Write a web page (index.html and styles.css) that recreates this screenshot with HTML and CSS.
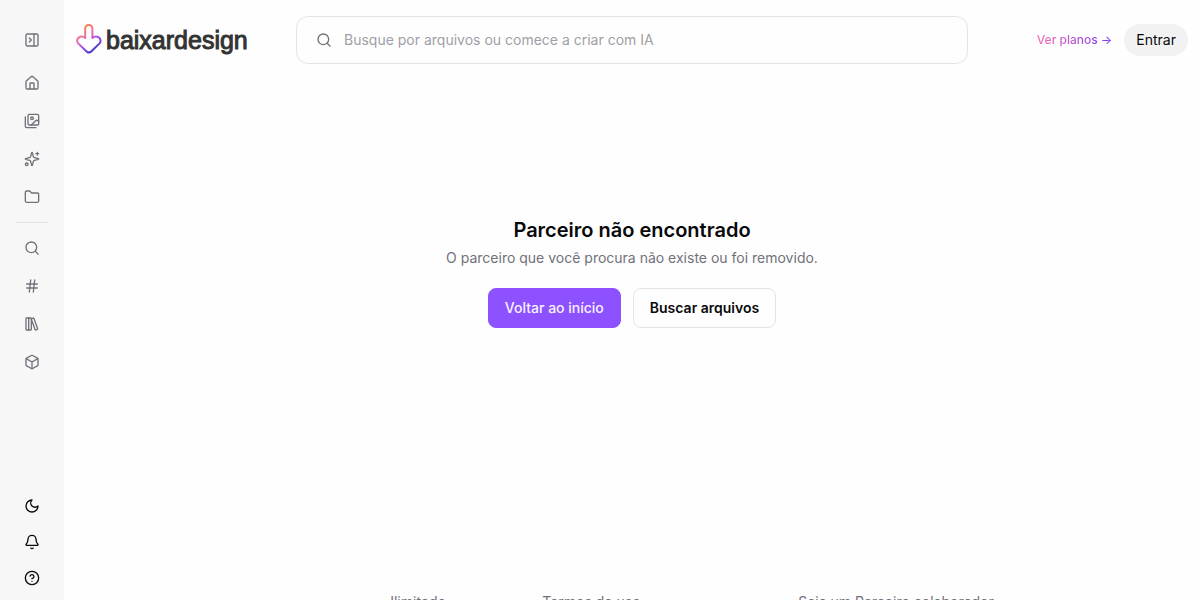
FILE: index.html
```html
<!DOCTYPE html>
<html lang="pt-BR">
<head>
    <meta charset="UTF-8">
    <meta name="viewport" content="width=device-width, initial-scale=1">
    <title>Parceiro não encontrado</title>
    <link rel="stylesheet" href="styles.css">
</head>
<body>
<aside class="sidebar">
    <button class="icon-button" aria-label="Expandir menu">
        <svg class="icon" viewBox="0 0 24 24"><rect x="3" y="3" width="18" height="18" rx="2"/><path d="M15 3v18M8 9l3 3-3 3"/></svg>
    </button>
    <nav class="menu">
        <a href="#" class="menu-link" aria-label="Início">
            <svg class="icon" viewBox="0 0 24 24"><path d="M15 21v-8a1 1 0 0 0-1-1h-4a1 1 0 0 0-1 1v8"/><path d="M3 10a2 2 0 0 1 .709-1.528l7-5.999a2 2 0 0 1 2.582 0l7 5.999A2 2 0 0 1 21 10v9a2 2 0 0 1-2 2H5a2 2 0 0 1-2-2z"/></svg>
        </a>
        <a href="#" class="menu-link" aria-label="Imagens">
            <svg class="icon" viewBox="0 0 24 24"><path d="M18 22H4a2 2 0 0 1-2-2V6"/><path d="m22 13-1.296-1.296a2.41 2.41 0 0 0-3.408 0L11 18"/><circle cx="12" cy="8" r="2"/><rect x="6" y="2" width="16" height="16" rx="2"/></svg>
        </a>
        <a href="#" class="menu-link" aria-label="Criar com IA">
            <svg class="icon" viewBox="0 0 24 24"><path d="M9.937 15.5A2 2 0 0 0 8.5 14.063l-6.135-1.582a.5.5 0 0 1 0-.962L8.5 9.936A2 2 0 0 0 9.937 8.5l1.582-6.135a.5.5 0 0 1 .963 0L14.063 8.5A2 2 0 0 0 15.5 9.937l6.135 1.581a.5.5 0 0 1 0 .964L15.5 14.063a2 2 0 0 0-1.437 1.437l-1.582 6.135a.5.5 0 0 1-.963 0z"/><path d="M20 2v4M22 4h-4"/><circle cx="4" cy="20" r="2"/></svg>
        </a>
        <a href="#" class="menu-link" aria-label="Pastas">
            <svg class="icon" viewBox="0 0 24 24"><path d="M20 20a2 2 0 0 0 2-2V8a2 2 0 0 0-2-2h-7.9a2 2 0 0 1-1.69-.9L9.6 3.9A2 2 0 0 0 7.93 3H4a2 2 0 0 0-2 2v13a2 2 0 0 0 2 2Z"/></svg>
        </a>
    </nav>
    <hr class="divider">
    <nav class="menu">
        <a href="#" class="menu-link" aria-label="Buscar">
            <svg class="icon" viewBox="0 0 24 24"><circle cx="11" cy="11" r="8"/><path d="m21 21-4.3-4.3"/></svg>
        </a>
        <a href="#" class="menu-link" aria-label="Tags">
            <svg class="icon" viewBox="0 0 24 24"><path d="M4 9h16M4 15h16M10 3 8 21M16 3l-2 18"/></svg>
        </a>
        <a href="#" class="menu-link" aria-label="Coleções">
            <svg class="icon" viewBox="0 0 24 24"><rect x="3" y="3" width="8" height="18" rx="1"/><path d="M7 3v18"/><path d="M20.4 18.9c.2.5-.1 1.1-.6 1.3l-1.9.7c-.5.2-1.1-.1-1.3-.6L11.1 5.1c-.2-.5.1-1.1.6-1.3l1.9-.7c.5-.2 1.1.1 1.3.6Z"/></svg>
        </a>
        <a href="#" class="menu-link" aria-label="3D">
            <svg class="icon" viewBox="0 0 24 24"><path d="M21 8a2 2 0 0 0-1-1.73l-7-4a2 2 0 0 0-2 0l-7 4A2 2 0 0 0 3 8v8a2 2 0 0 0 1 1.73l7 4a2 2 0 0 0 2 0l7-4A2 2 0 0 0 21 16Z"/><path d="m3.3 7 8.7 5 8.7-5M12 22V12"/></svg>
        </a>
    </nav>
    <div class="tools">
        <button class="icon-button" aria-label="Tema escuro">
            <svg class="icon" viewBox="0 0 24 24"><path d="M12 3a6 6 0 0 0 9 9 9 9 0 1 1-9-9Z"/></svg>
        </button>
        <button class="icon-button" aria-label="Notificações">
            <svg class="icon" viewBox="0 0 24 24"><path d="M10.268 21a2 2 0 0 0 3.464 0"/><path d="M3.262 15.326A1 1 0 0 0 4 17h16a1 1 0 0 0 .74-1.673C19.41 13.956 18 12.499 18 8A6 6 0 0 0 6 8c0 4.499-1.411 5.956-2.738 7.326"/></svg>
        </button>
        <button class="icon-button" aria-label="Ajuda">
            <svg class="icon" viewBox="0 0 24 24"><circle cx="12" cy="12" r="10"/><path d="M9.09 9a3 3 0 0 1 5.83 1c0 2-3 3-3 3M12 17h.01"/></svg>
        </button>
    </div>
</aside>

<div class="page">
    <header class="header">
        <a href="#" class="logo">
            <svg class="logo-mark" viewBox="0 0 26 32">
                <defs>
                    <linearGradient id="mark" x1="5" y1="3" x2="20" y2="26" gradientUnits="userSpaceOnUse">
                        <stop offset="0" stop-color="#ff8246"/>
                        <stop offset=".4" stop-color="#ec6cb4"/>
                        <stop offset=".68" stop-color="#9a4cf2"/>
                        <stop offset="1" stop-color="#3f35c4"/>
                    </linearGradient>
                </defs>
                <path d="M9.200 14V4.600a3.600 3.600 0 0 1 7.200 0V14C18 12.600 20.600 12 22.700 13.300C24.900 14.700 25.100 17.600 23.500 19.400L15.500 27.200C14 28.600 11.800 28.600 10.300 27.200L2.200 19.400C.6 17.600.8 14.700 3 13.300C5.100 12 7.600 12.600 9.200 14z"/>
            </svg>
            <span class="logo-text">baixardesign</span>
        </a>
        <form class="search">
            <svg class="icon" viewBox="0 0 24 24"><circle cx="11" cy="11" r="8"/><path d="m21 21-4.3-4.3"/></svg>
            <input type="search" class="search-input" aria-label="Buscar" placeholder="Busque por arquivos ou comece a criar com IA">
        </form>
        <div class="account">
            <a href="#" class="plans">Ver planos →</a>
            <button class="login">Entrar</button>
        </div>
    </header>

    <main class="not-found">
        <h1 class="title">Parceiro não encontrado</h1>
        <p class="message">O parceiro que você procura não existe ou foi removido.</p>
        <div class="actions">
            <a href="#" class="button primary">Voltar ao início</a>
            <a href="#" class="button">Buscar arquivos</a>
        </div>
    </main>

    <footer class="footer">
        <a href="#">Ilimitado</a>
        <a href="#">Termos de uso</a>
        <a href="#">Seja um Parceiro colaborador</a>
    </footer>
</div>
</body>
</html>
```
FILE: styles.css
```css
* {
    box-sizing: border-box;
}

body {
    margin: 0;
    height: 100vh;
    display: flex;
    overflow: hidden;
    font-family: Inter, "Liberation Sans", sans-serif;
    font-size: 14px;
    line-height: 20px;
    color: #09090b;
    background-color: #fefefe;
}

a {
    color: inherit;
    text-decoration: none;
}

button {
    border: none;
    padding: 0;
    font: inherit;
    color: inherit;
    cursor: pointer;
}

.icon {
    width: 16px;
    height: 16px;
    flex-shrink: 0;
    fill: none;
    stroke: currentColor;
    stroke-width: 2;
    stroke-linecap: round;
    stroke-linejoin: round;
}

/* sidebar */
.sidebar {
    width: 64px;
    flex-shrink: 0;
    display: flex;
    flex-direction: column;
    padding: 24px 16px 6px;
    background-color: #f7f7f7;
    color: #71717a;
}

.icon-button,
.menu-link {
    display: flex;
    align-items: center;
    justify-content: center;
    height: 32px;
    background: none;
}

.menu {
    display: flex;
    flex-direction: column;
    gap: 2px;
}

.menu-link {
    height: 36px;
}

.icon-button + .menu {
    margin-top: 9px;
}

.divider {
    width: 100%;
    height: 1px;
    margin: 7px 0;
    border: none;
    background-color: #e4e4e7;
}

.tools {
    display: flex;
    flex-direction: column;
    gap: 4px;
    margin-top: auto;
    color: #09090b;
}

/* header */
.page {
    flex: 1;
    min-width: 0;
    overflow: hidden;
}

.header {
    display: grid;
    grid-template-columns: 1fr minmax(0, 672px) 1fr;
    align-items: center;
    padding: 16px 12px;
}

.logo {
    display: flex;
    align-items: center;
    gap: 4px;
}

.logo-mark {
    width: 26px;
    height: 32px;
    fill: none;
    stroke: url(#mark);
    stroke-width: 2;
    stroke-linejoin: round;
}

.logo-text {
    font-family: "Liberation Sans", Arial, sans-serif;
    font-size: 25px;
    line-height: 32px;
    color: #333;
    -webkit-text-stroke: 1px #333;
}

.search {
    display: flex;
    align-items: center;
    gap: 12px;
    height: 48px;
    padding: 0 19px;
    border: 1px solid #e4e4e7;
    border-radius: 12px;
    color: #71717a;
}

.search-input {
    flex: 1;
    min-width: 0;
    padding: 0;
    border: none;
    outline: none;
    background: none;
    font: inherit;
    color: #09090b;
}

.search-input::placeholder {
    color: #9f9fa6;
}

.account {
    display: flex;
    align-items: center;
    justify-content: flex-end;
    gap: 12px;
}

.plans {
    font-size: 12px;
    font-weight: 500;
    background: linear-gradient(to right, #f472b6, #7c3aed);
    background-clip: text;
    -webkit-background-clip: text;
    color: transparent;
}

.login {
    height: 32px;
    padding: 0 12px;
    border-radius: 16px;
    background-color: #f2f2f2;
}

/* message */
.not-found {
    display: flex;
    flex-direction: column;
    align-items: center;
    min-height: 512px;
    padding: 136px 16px 0;
    text-align: center;
}

.title {
    margin: 0;
    font-size: 20px;
    line-height: 28px;
    font-weight: 600;
}

.message {
    margin: 4px 0 20px;
    color: #71717a;
}

.actions {
    display: flex;
    gap: 12px;
}

.button {
    display: flex;
    align-items: center;
    height: 40px;
    padding: 0 16px;
    border: 1px solid #e4e4e7;
    border-radius: 8px;
    font-weight: 600;
}

.button.primary {
    border-color: #8e51ff;
    background-color: #8e51ff;
    color: #f5f3ff;
    font-weight: 500;
}

/* footer */
.footer {
    display: grid;
    grid-template-columns: 152px 256px auto;
    justify-content: center;
    padding: 0 0 48px 120px;
    color: #71717a;
}
```
